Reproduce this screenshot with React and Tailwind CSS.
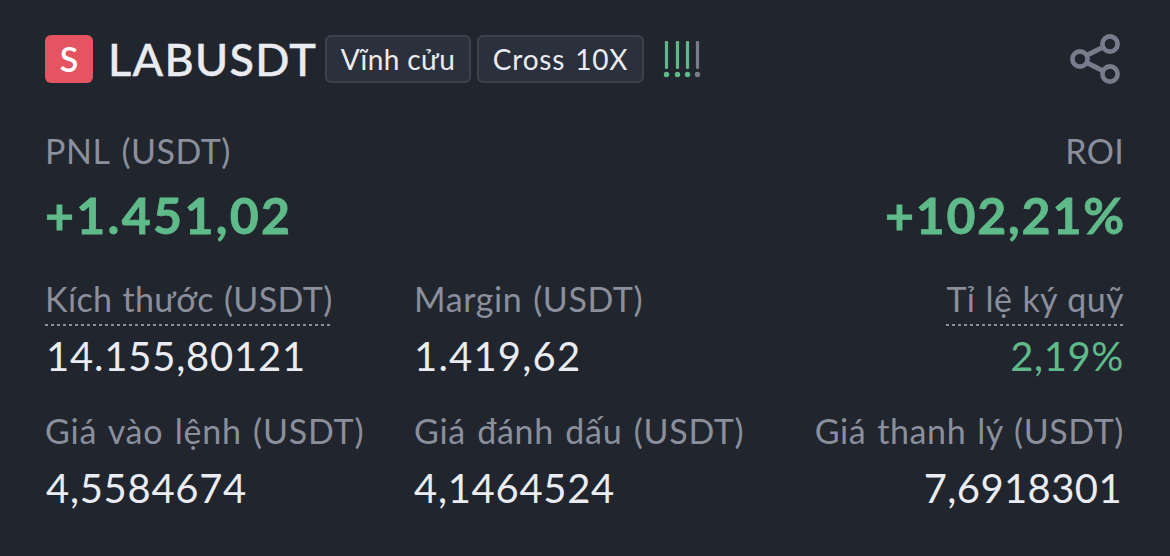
const stats = [
  { label: "Kích thước (USDT)", value: "14.155,80121", dotted: true, labelClass: "tracking-[0.4px] [word-spacing:0.8px]", valueClass: "pl-px tracking-[0.8px]" },
  { label: "Margin (USDT)", value: "1.419,62", labelClass: "tracking-[0.6px] [word-spacing:1.5px]", valueClass: "tracking-[1.2px]" },
  { label: "Tỉ lệ ký quỹ", value: "2,19%", dotted: true, right: true, labelClass: "tracking-[0.4px] [word-spacing:1px]", valueClass: "text-[#5fba89] tracking-[0.6px]" },
  { label: "Giá vào lệnh (USDT)", value: "4,5584674", labelClass: "tracking-[0.8px] [word-spacing:1.8px]", valueClass: "pl-px tracking-[0.7px]" },
  { label: "Giá đánh dấu (USDT)", value: "4,1464524", labelClass: "tracking-[0.7px] [word-spacing:2px]", valueClass: "tracking-[0.7px]" },
  { label: "Giá thanh lý (USDT)", value: "7,6918301", right: true, labelClass: "tracking-[0.6px] [word-spacing:1.6px]", valueClass: "mr-0.5 tracking-[0.4px]" },
]

function Tag({ children, className }) {
  return (
    <span className={`flex h-12 items-center justify-center rounded-md border-2 border-[#3c424d] bg-[#2a303c] text-[28px] whitespace-nowrap ${className}`}>
      {children}
    </span>
  )
}

function RiskBars() {
  const bars = [
    { x: 11.5, color: "#5fba89" },
    { x: 22.5, color: "#5fba89" },
    { x: 32.5, color: "#5fba89" },
    { x: 42.5, color: "#777c8a" },
  ]
  return (
    <svg width="48" height="48" viewBox="0 0 48 48" className="ml-[11px]">
      {bars.map((b) => (
        <g key={b.x} fill={b.color}>
          <rect x={b.x - 1.6} y="6" width="3.2" height="28" rx="1.2" />
          <circle cx={b.x} cy="39.5" r="2.7" />
        </g>
      ))}
    </svg>
  )
}

function ShareIcon() {
  return (
    <svg width="56" height="52" viewBox="0 0 56 52" fill="none" stroke="#777d8c" strokeWidth="4.6" className="mr-px ml-auto">
      <path d="M18.5 22.5 35.5 13.8M18.5 29.5 35.5 38.2" strokeWidth="4.8" />
      <circle cx="12" cy="26" r="7.6" />
      <circle cx="42" cy="11" r="7.6" />
      <circle cx="42" cy="41" r="7.6" />
    </svg>
  )
}

function Stat({ label, value, dotted, right, labelClass, valueClass }) {
  return (
    <div className={`flex flex-col whitespace-nowrap ${right ? "items-end" : "items-start"}`}>
      <div className="h-12 text-[34px] leading-[42px] text-[#8a8f9b]">
        <div className={labelClass}>{label}</div>
        {dotted && (
          <div className="mt-1 h-0.5 bg-[repeating-linear-gradient(90deg,#8a8f9b_0_3px,transparent_3px_6px)]" />
        )}
      </div>
      <div className={`mt-[5px] text-[40px] leading-[51px] ${valueClass}`}>{value}</div>
    </div>
  )
}

export default function App() {
  return (
    <div className="h-[556px] w-[1170px] overflow-hidden bg-[#21252e] px-[45px] pt-[35px] font-['Lato','Noto_Sans',sans-serif] text-[#eaecf2]">
      <div className="flex h-12 items-center">
        <div className="flex size-12 items-center justify-center rounded-md bg-[#e45561] pb-0.5 text-[34px] font-semibold text-white">S</div>
        <h1 className="ml-[15px] w-[211px] pt-0.5 text-[45px] font-medium tracking-[1.3px] whitespace-nowrap [-webkit-text-stroke:0.4px_#eaecf2]">LABUSDT</h1>
        <Tag className="ml-[6px] w-[146px] tracking-[0.4px]">Vĩnh cửu</Tag>
        <Tag className="ml-[6px] w-[167px] tracking-[0.8px] [word-spacing:2px]">Cross 10X</Tag>
        <RiskBars />
        <ShareIcon />
      </div>

      <div className="mt-[47px] flex justify-between">
        <div>
          <div className="text-[34px] leading-[42px] tracking-[0.5px] text-[#8a8f9b] [word-spacing:3px]">PNL (USDT)</div>
          <div className="mt-[15px] text-[50px] leading-14 font-bold tracking-[2.3px] text-[#5fba89] [-webkit-text-stroke:0.8px_#5fba89]">+1.451,02</div>
        </div>
        <div className="text-right">
          <div className="mr-px text-[34px] leading-[42px] tracking-[0.3px] text-[#8a8f9b]">ROI</div>
          <div className="mt-[15px] -mr-px text-[50px] leading-14 font-bold tracking-[1.8px] text-[#5fba89] [-webkit-text-stroke:0.8px_#5fba89]">+102,21%</div>
        </div>
      </div>

      <div className="mt-[35px] grid grid-cols-[369px_369px_341px] gap-y-[28px]">
        {stats.map((s) => (
          <Stat key={s.label} {...s} />
        ))}
      </div>
    </div>
  )
}
